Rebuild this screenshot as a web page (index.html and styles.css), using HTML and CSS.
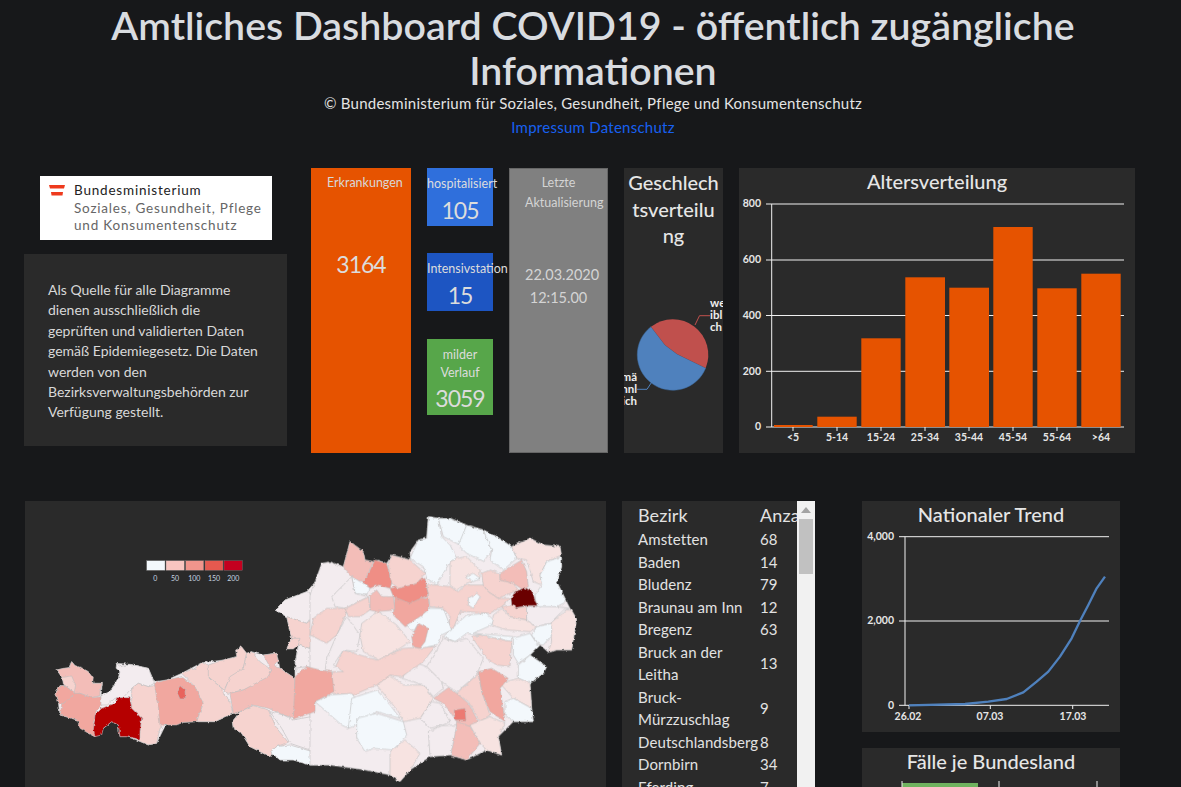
FILE: index.html
```html
<!DOCTYPE html>
<html lang="de">
<head>
<meta charset="utf-8">
<title>Amtliches Dashboard COVID19</title>
<link rel="stylesheet" href="styles.css">
</head>
<body>
<header class="head">
  <h1>Amtliches Dashboard COVID19 - öffentlich zugängliche Informationen</h1>
  <p class="copy">© Bundesministerium für Soziales, Gesundheit, Pflege und Konsumentenschutz</p>
  <p class="links"><a href="#">Impressum</a> <a href="#">Datenschutz</a></p>
</header>

<section class="row-top">
  <div class="col-left">
    <div class="logo">
      <svg class="flag" width="16" height="11" viewBox="0 0 16 11"><path class="flag-r" d="M0 0H16L15 3.500H1Z"/><path class="flag-r" d="M2 7H14L13.500 10.500H2.500Z"/></svg>
      <div class="logo-text">
        <div class="logo-strong">Bundesministerium</div>
        <div>Soziales, Gesundheit, Pflege</div>
        <div>und Konsumentenschutz</div>
      </div>
    </div>
    <div class="note">Als Quelle für alle Diagramme dienen ausschließlich die geprüften und validierten Daten gemäß Epidemiegesetz. Die Daten werden von den Bezirksverwaltungsbehörden zur Verfügung gestellt.</div>
  </div>

  <div class="tile tile-orange">
    <div class="tile-label">Erkrankungen</div>
    <div class="tile-big tile-big-low">3164</div>
  </div>

  <div class="stack">
    <div class="mini mini-blue"><div class="mini-label">hospitalisiert</div><div class="tile-big">105</div></div>
    <div class="mini mini-navy"><div class="mini-label">Intensivstation</div><div class="tile-big">15</div></div>
    <div class="mini mini-green"><div class="mini-label">milder Verlauf</div><div class="tile-big">3059</div></div>
  </div>

  <div class="tile tile-gray">
    <div class="tile-label">Letzte Aktualisierung</div>
    <div class="stamp">22.03.2020</div>
    <div class="stamp stamp-time">12:15.00</div>
  </div>

  <div class="panel pie-panel">
    <h2 class="pie-title">Geschlechtsverteilung</h2>
    <svg class="pie" width="99" height="205" viewBox="624 248 99 205">
      <path class="pie-blue" d="M651 326.700A35.500 35.500 0 1 0 705.700 368L677 354L665 345Z"/>
      <path class="pie-red" d="M651 326.700A35.500 35.500 0 0 1 705.700 368L677 354L665 345Z"/>
      <path class="lead-red" d="M695 325L699.500 315.700H710"/>
      <path class="lead-blue" d="M652 381.700L647 389.300H637"/>
      <text class="pie-text" x="710" y="307">we</text>
      <text class="pie-text" x="710" y="319">ibl</text>
      <text class="pie-text" x="710" y="331">ch</text>
      <text class="pie-text end" x="637" y="381">mä</text>
      <text class="pie-text end" x="637" y="393">nnl</text>
      <text class="pie-text end" x="637" y="405">ich</text>
    </svg>
  </div>

  <div class="panel age-panel">
    <h2 class="chart-title">Altersverteilung</h2>
    <svg class="chart" width="396" height="255" viewBox="739 198 396 255">
      <path class="grid" d="M766 204H1124M766 260H1124M766 315.500H1124M766 371.300H1124M766 427H1124M771.700 204V427"/>
      <g class="bars">
        <rect x="774" y="425" width="38.700" height="2"/>
        <rect x="817.300" y="416.700" width="39.400" height="10.300"/>
        <rect x="861.300" y="338.300" width="39.400" height="88.700"/>
        <rect x="905.300" y="277.300" width="39.700" height="149.700"/>
        <rect x="949.300" y="287.700" width="39.700" height="139.300"/>
        <rect x="993.300" y="227" width="39.400" height="200"/>
        <rect x="1037.300" y="288.300" width="39.400" height="138.700"/>
        <rect x="1081.300" y="273.700" width="39.400" height="153.300"/>
      </g>
      <path class="grid" d="M793 427V431M837 427V431M881 427V431M925 427V431M969 427V431M1013 427V431M1057 427V431M1101 427V431"/>
      <g class="tick-y">
        <text x="761" y="207">800</text><text x="761" y="263">600</text><text x="761" y="319">400</text><text x="761" y="375">200</text><text x="761" y="430">0</text>
      </g>
      <g class="tick-x">
        <text x="793" y="441">&lt;5</text><text x="837" y="441">5-14</text><text x="881" y="441">15-24</text><text x="925" y="441">25-34</text><text x="969" y="441">35-44</text><text x="1013" y="441">45-54</text><text x="1057" y="441">55-64</text><text x="1101" y="441">&gt;64</text>
      </g>
    </svg>
  </div>
</section>

<section class="row-bottom">
  <div class="panel map-panel">
    <svg class="map" width="581" height="400" viewBox="25 501 581 400">
      <defs>
        <filter id="rough" x="0" y="0" width="100%" height="100%" filterUnits="objectBoundingBox">
          <feTurbulence type="fractalNoise" baseFrequency=".25" numOctaves="2" seed="4" result="n"/>
          <feDisplacementMap in="SourceGraphic" in2="n" scale="3" xChannelSelector="R" yChannelSelector="G"/>
        </filter>
      </defs>
      <g class="legend">
        <rect class="w" x="146.700" y="560.700" width="18.300" height="9.600"/>
        <rect class="l1" x="166" y="560.700" width="18.300" height="9.600"/>
        <rect class="l2" x="185.700" y="560.700" width="18" height="9.600"/>
        <rect class="l3" x="205" y="560.700" width="18" height="9.600"/>
        <rect class="l4" x="224" y="560.700" width="18.300" height="9.600"/>
        <text x="155.300" y="581">0</text><text x="175" y="581">50</text><text x="194.300" y="581">100</text><text x="214" y="581">150</text><text x="233.300" y="581">200</text>
      </g>
      <g class="rough">
      <g class="regions" transform="translate(20 495) scale(.3333)">
        <polygon class="g" points="105,597 120,572 135,572 125,545 110,525 147,518 155,500 165,512 205,530 220,565 247,565 243,602 270,590 295,550 300,530 288,505 330,508 385,520 403,560 440,555 485,535 545,503 610,495 650,485 660,455 680,475 695,470 730,480 770,475 780,520 825,550 825,500 835,450 800,462 815,430 800,365 765,345 795,315 860,290 885,262 930,270 930,810 870,810 820,795 780,795 752,770 770,755 750,785 690,755 665,715 640,700 637,680 660,650 640,655 585,680 530,680 490,682 437,690 410,745 385,750 350,735 320,725 300,725 295,690 275,680 250,700 225,725 205,715 172,675 120,660 115,625"/>
        <polygon class="p3" points="110,525 130,520 147,518 155,500 165,512 185,518 205,530 220,550 218,565 247,565 240,590 240,602 215,608 180,595 150,600 135,572 125,545"/>
        <polygon class="p2" points="127,547 155,543 167,570 163,592 145,580 130,567"/>
        <polygon class="p4" points="105,597 120,572 135,572 165,595 145,615 125,630 115,625"/>
        <polygon class="p4" points="125,630 165,595 180,595 215,608 243,605 245,630 230,645 220,685 230,700 225,725 205,715 180,700 172,675 120,660"/>
        <polygon class="g" points="290,505 300,515 330,508 385,520 403,565 385,575 355,565 335,580 310,607 285,610 262,630 243,630 243,602 270,590 295,550 300,530 288,520"/>
        <polygon class="p2" points="335,580 355,565 385,575 415,570 420,640 437,690 420,700 410,745 385,750 350,735 360,710 365,670 335,640"/>
        <polygon class="dk" points="225,660 245,640 285,625 290,608 330,608 335,640 365,670 360,710 360,735 345,730 320,725 300,725 295,690 275,680 250,700 245,720 225,725 220,705"/>
        <polygon class="p4" points="403,565 440,555 485,545 525,575 550,625 530,680 490,682 470,690 420,690 415,640"/>
        <polygon class="r1" points="470,590 480,572 495,585 497,612 480,612"/>
        <polygon class="p2" points="485,535 525,520 545,503 575,515 565,545 605,580 612,600 628,615 640,655 585,680 530,680 550,625 525,575"/>
        <polygon class="p2" points="565,510 610,495 650,485 647,465 665,455 680,475 670,520 655,535 625,560 612,585 565,545"/>
        <polygon class="p2" points="680,475 695,470 720,500 755,525 745,545 710,570 670,585 625,595 612,590 630,545 670,520"/>
        <polygon class="p3" points="630,595 670,585 745,545 755,525 730,480 770,475 775,500 760,510 780,520 825,550 825,670 790,660 745,640 700,630 660,650 640,655"/>
        <polygon class="p2" points="637,680 660,650 700,632 745,645 770,700 805,742 770,755 750,785 690,755 665,715 640,700"/>
        <polygon class="g" points="750,650 790,660 820,675 900,660 900,780 870,765 810,745 785,700"/>
        <polygon class="w" points="752,770 770,755 810,750 870,768 900,775 900,810 870,810 820,795 780,795"/>
        <polygon class="g" points="825,520 835,450 870,460 900,470 900,525 860,515"/>
        <polygon class="g" points="765,345 795,315 860,290 885,300 885,350 860,385 800,365"/>
        <polygon class="p2" points="800,365 860,385 885,365 900,370 900,480 870,460 835,450 815,430"/>
        <polygon class="p2" points="800,462 815,430 840,430 835,450 820,462"/>
      </g>
      <g class="regions" transform="translate(310 495) scale(.3333)">
        <polygon class="g" points="0,300 35,205 60,200 100,215 120,140 160,170 165,195 190,200 205,195 230,205 245,180 300,195 300,170 325,135 350,130 355,65 385,70 420,70 470,90 520,105 560,125 605,155 660,130 700,150 750,155 755,215 740,260 780,340 800,372 785,465 740,465 715,472 690,450 660,480 710,515 700,535 660,565 665,640 670,680 610,680 565,725 575,780 530,765 470,795 420,780 360,785 300,825 270,860 240,840 165,825 60,810 0,810"/>
        <polygon class="w" points="300,190 325,135 350,130 355,65 385,70 395,125 420,150 440,190 420,200 380,270 350,250 340,215"/>
        <polygon class="w" points="385,70 420,70 470,90 450,150 400,125"/>
        <polygon class="w" points="470,90 520,105 545,165 520,200 470,175 445,150"/>
        <polygon class="w" points="520,105 560,125 605,155 620,190 580,225 540,195 545,165"/>
        <polygon class="p1" points="605,155 660,130 700,150 750,155 755,180 710,200 690,240 695,270 670,260 650,195 620,190"/>
        <polygon class="w" points="710,200 755,185 755,215 740,260 770,320 740,335 680,340 675,300 695,270 690,240"/>
        <polygon class="p2" points="350,270 380,270 420,275 445,290 465,270 520,270 535,290 565,310 600,310 575,335 540,355 470,350 450,350 430,400 415,405 420,365 400,340 360,335"/>
        <polygon class="p1" points="420,200 440,190 470,185 510,225 510,250 470,265 440,285 420,270"/>
        <polygon class="w" points="465,245 490,235 510,250 490,260"/>
        <polygon class="p2" points="515,235 540,225 570,235 570,255 610,265 625,285 565,310 535,290 520,270"/>
        <polygon class="p3" points="570,235 635,195 650,230 655,275 640,285 610,265 570,255"/>
        <polygon class="w" points="475,310 500,295 510,305 490,340 475,330"/>
        <polygon class="p2" points="575,335 605,330 620,338 650,335 650,375 600,365"/>
        <polygon class="vdk" points="603,310 615,290 645,278 668,290 675,315 682,332 650,332 620,338 605,330"/>
        <polygon class="p1" points="550,360 575,340 600,365 650,375 680,395 660,410 590,405 545,390"/>
        <polygon class="w" points="400,425 470,360 530,355 550,375 545,390 500,410 490,415 610,425 600,440 560,430 510,420 470,415 435,440"/>
        <polygon class="g" points="650,335 740,335 780,340 760,345 720,385 680,395 650,375"/>
        <polygon class="p1" points="720,385 770,345 785,345 800,372 785,465 740,465 715,472 725,440"/>
        <polygon class="w" points="680,395 725,385 725,420 700,450 680,445 665,420"/>
        <polygon class="w" points="610,430 660,415 680,445 690,450 660,480 625,505 610,480"/>
        <polygon class="w" points="625,510 660,480 710,515 700,535 660,565 625,550"/>
        <polygon class="p1" points="570,565 625,550 660,565 665,640 610,610"/>
        <polygon class="w" points="585,620 610,610 665,640 670,680 610,680 585,660"/>
        <polygon class="p2" points="485,425 510,420 605,440 600,515 560,510 530,490"/>
        <polygon class="p2" points="440,595 505,535 515,590 540,660 510,680 475,620"/>
        <polygon class="p4" points="505,530 545,520 595,550 570,580 585,680 540,650 515,590"/>
        <polygon class="p3" points="370,610 415,578 440,595 475,625 505,680 480,695 440,680 420,650 400,625"/>
        <polygon class="r2" points="432,645 465,640 468,675 435,675"/>
        <polygon class="p3" points="440,680 480,695 510,745 470,795 422,780"/>
        <polygon class="p1" points="480,690 540,665 585,685 565,725 575,780 530,765 510,745"/>
        <polygon class="g" points="330,670 365,620 390,625 420,680 395,692 360,700"/>
        <polygon class="g" points="355,710 395,692 440,690 430,745 422,780 360,785"/>
        <polygon class="g" points="350,515 385,455 400,430 435,440 470,430 520,490 500,540 440,590 415,575 395,560"/>
        <polygon class="g" points="275,550 310,500 350,515 395,560 400,580 370,605 340,570"/>
        <polygon class="p1" points="200,570 240,540 280,570 340,570 370,610 330,670 280,680 265,650"/>
        <polygon class="p2" points="65,540 100,465 150,480 200,495 280,460 375,455 340,500 275,545 240,540 200,570 130,600 70,595"/>
        <polygon class="g" points="45,530 50,490 80,420 110,365 150,420 140,470 100,465 70,510 100,530"/>
        <polygon class="p2" points="0,420 10,370 50,340 115,340 80,420 50,445"/>
        <polygon class="p1" points="155,385 190,360 200,345 260,390 300,440 270,460 205,495 160,470 150,420"/>
        <polygon class="p4" points="255,305 300,320 355,305 358,345 300,390 285,395 250,360"/>
        <polygon class="p5" points="240,280 300,260 345,250 355,300 300,325 250,305"/>
        <polygon class="w" points="290,390 330,365 360,340 400,340 425,405 395,420 380,450 330,460 350,410 325,385 310,410"/>
        <polygon class="p4" points="305,425 325,385 355,400 345,440 330,460 310,455"/>
        <polygon class="p2" points="235,205 245,180 300,195 345,235 320,265 265,280 240,260"/>
        <polygon class="p5" points="160,265 195,195 230,205 245,265 240,280 205,270 180,280"/>
        <polygon class="p3" points="100,215 120,140 160,170 165,195 190,200 160,265 125,245"/>
        <polygon class="p3" points="180,300 200,285 215,305 250,305 255,345 200,350 180,345"/>
        <polygon class="w" points="125,245 160,265 180,280 170,300 135,295"/>
        <polygon class="p2" points="105,340 175,305 180,345 150,365 115,365"/>
        <polygon class="g" points="65,305 125,245 135,295 175,305 105,340 75,335"/>
        <polygon class="p4" points="-45,545 -10,515 30,525 65,530 72,590 15,620 15,650 -50,672"/>
        <polygon class="w" points="15,620 60,600 125,595 150,630 115,700 95,690"/>
        <polygon class="w" points="125,610 200,585 240,630 270,670 200,650 140,690 115,700"/>
        <polygon class="w" points="140,670 200,655 280,680 290,720 250,765 190,760 165,770 140,730"/>
        <polygon class="p1" points="240,770 285,735 330,775 300,825 270,860 240,840"/>
      </g>
      </g>
    </svg>
  </div>

  <div class="panel list-panel">
    <div class="list-view">
      <table class="list">
        <thead><tr><th class="name">Bezirk</th><th>Anzahl</th></tr></thead>
        <tbody>
          <tr><td>Amstetten</td><td>68</td></tr>
          <tr><td>Baden</td><td>14</td></tr>
          <tr><td>Bludenz</td><td>79</td></tr>
          <tr><td>Braunau am Inn</td><td>12</td></tr>
          <tr><td>Bregenz</td><td>63</td></tr>
          <tr><td>Bruck an der Leitha</td><td>13</td></tr>
          <tr><td>Bruck-Mürzzuschlag</td><td>9</td></tr>
          <tr><td>Deutschlandsberg</td><td>8</td></tr>
          <tr><td>Dornbirn</td><td>34</td></tr>
          <tr><td>Eferding</td><td>7</td></tr>
        </tbody>
      </table>
    </div>
    <div class="scrollbar">
      <div class="scroll-btn"><svg width="10" height="6" viewBox="0 0 10 6"><path class="scroll-arrow" d="M5 0L10 6H0Z"/></svg></div>
      <div class="scroll-thumb"></div>
    </div>
  </div>

  <div class="col-right">
    <div class="panel trend-panel">
      <h2 class="chart-title">Nationaler Trend</h2>
      <svg class="chart" width="258" height="201" viewBox="862 531 258 201">
        <path class="grid" d="M899 536.700H1109M899 621H1109M899 705.300H1109M905 536.700V705.300M909 705.300V709M990.300 705.300V709M1072.700 705.300V709"/>
        <g transform="translate(850 495) scale(.3333)"><polyline class="trend" points="177,631 345,627 415,620 470,612 520,592 560,560 595,530 630,485 665,430 690,378 715,330 740,280 765,245"/></g>
        <g class="tick-y"><text x="894" y="540">4,000</text><text x="894" y="624">2,000</text><text x="894" y="709">0</text></g>
        <g class="tick-x"><text x="908" y="720">26.02</text><text x="990" y="720">07.03</text><text x="1073" y="720">17.03</text></g>
      </svg>
    </div>
    <div class="panel state-panel">
      <h2 class="chart-title">Fälle je Bundesland</h2>
      <svg class="chart" width="258" height="60" viewBox="862 778 258 60">
        <rect class="state-bar" x="902" y="783" width="76" height="30"/>
        <path class="grid" d="M902 781V820M999 781V820M1097 781V820"/>
      </svg>
    </div>
  </div>
</section>
</body>
</html>
```
FILE: styles.css
```css
html, body {
  margin: 0;
  height: 787px;
  overflow: hidden;
  background: #17181a;
  color: #d6d8da;
  font-family: Lato, "Open Sans", sans-serif;
}

.head {
  padding: 2px 0 0 5px;
  text-align: center;
}
.head h1 {
  margin: 0;
  padding: 0 100px;
  font-size: 39.300px;
  line-height: 45px;
  font-weight: 600;
  color: #d9dce0;
}
.copy {
  margin: 0;
  font-size: 15px;
  line-height: 22px;
  letter-spacing: .25px;
  color: #e4e4e4;
}
.links {
  margin: 2px 0 0;
  font-size: 15px;
  line-height: 22px;
  letter-spacing: .25px;
}
.links a {
  color: #1760f0;
  text-decoration: none;
}

.row-top {
  display: flex;
  gap: 16px;
  height: 285px;
  margin-top: 30px;
  padding-left: 24px;
}
.col-left {
  width: 263px;
  margin-right: 8px;
}
.logo {
  display: flex;
  gap: 9px;
  box-sizing: border-box;
  width: 232px;
  height: 64px;
  margin: 8px 0 14px 16px;
  padding: 6px 0 0 9px;
  background: #fff;
}
.flag { margin-top: 3px; flex: none; }
.flag-r { fill: #ee3a1d; }
.logo-text {
  font-size: 13.500px;
  line-height: 17.500px;
  letter-spacing: .8px;
  color: #666;
}
.logo-strong { color: #222; }
.note {
  box-sizing: border-box;
  height: 192px;
  padding: 26px 24px;
  background: #2a2a2a;
  font-size: 14px;
  line-height: 20.400px;
  color: #d8d8d8;
}

.tile {
  box-sizing: border-box;
  width: 100px;
  padding: 5px 16px 0;
  text-align: center;
  font-size: 12.500px;
  color: #d8d8d8;
}
.tile-orange { background: #e65300; }
.tile-gray {
  width: 99px;
  background: #808080;
  border: 1px solid #666;
  padding: 4px 15px 0;
  color: #d4d4d4;
}
.tile-label {
  line-height: 20px;
}
.tile-big {
  font-size: 23px;
  line-height: 32px;
  letter-spacing: -1px;
  color: #dcdcdc;
}
.tile-big-low { margin-top: 55px; }
.stamp {
  margin-top: 51px;
  font-size: 14.500px;
  line-height: 22px;
  white-space: nowrap;
}
.stamp-time { margin-top: 1px; }

.stack {
  width: 66px;
  display: flex;
  flex-direction: column;
}
.mini {
  box-sizing: border-box;
  height: 58px;
  padding-top: 6px;
  text-align: center;
  font-size: 12.500px;
  color: #dcdcdc;
  white-space: nowrap;
}
.mini-label { line-height: 20px; }
.mini-blue { background: #2f6fdc; }
.mini-navy { background: #1d55c2; margin-top: 27px; }
.mini-green {
  height: 76px;
  margin-top: 28px;
  padding-top: 7px;
  background: #57a64a;
  white-space: normal;
}
.mini-green .mini-label { line-height: 18px; }

.panel { background: #2a2a2a; }
.pie-panel {
  width: 99px;
  overflow: hidden;
}
.pie-title {
  box-sizing: border-box;
  margin: 0;
  height: 80px;
  padding: 1px 3px 0;
  font-size: 20px;
  line-height: 26.700px;
  font-weight: 500;
  text-align: center;
  word-break: break-all;
  color: #e6e6e6;
}
.pie, .chart, .map { display: block; }
.pie-blue { fill: #4f81bd; stroke: #3d6a9f; stroke-width: .5; }
.pie-red { fill: #c0504d; }
.lead-red, .lead-blue { fill: none; stroke-width: 1; }
.lead-red { stroke: #c0504d; }
.lead-blue { stroke: #4f81bd; }
.pie-text {
  font-size: 11.500px;
  font-weight: 700;
  fill: #eee;
}
.end { text-anchor: end; }

.age-panel { width: 396px; }
.chart-title {
  margin: 0;
  height: 30px;
  font-size: 20px;
  line-height: 27px;
  font-weight: 500;
  text-align: center;
  color: #e6e6e6;
}
.grid { fill: none; stroke: #f0f0f0; stroke-width: 1; }
.bars rect { fill: #e65300; }
.tick-y text, .tick-x text {
  font-size: 10.500px;
  font-weight: 700;
  fill: #e6e6e6;
}
.tick-y text { text-anchor: end; }
.tick-x text { text-anchor: middle; }

.row-bottom {
  display: flex;
  align-items: flex-start;
  margin: 48px 0 0 25px;
}
.map-panel {
  width: 581px;
  height: 400px;
  margin-right: 16px;
}
.rough { filter: url(#rough); }
.legend rect { stroke: #777; stroke-width: .4; }
.legend text {
  font-size: 7px;
  text-anchor: middle;
  fill: #c8d4e0;
}
.regions polygon { stroke: #bdbdbd; stroke-width: 1.800; stroke-linejoin: round; }
.w { fill: #f3f8fc; }
.g { fill: #f3ecef; }
.p1 { fill: #f7e3e1; }
.p2 { fill: #f6d3cf; }
.p3 { fill: #f3bdb8; }
.p4 { fill: #f1a79f; }
.p5 { fill: #ef8e85; }
.r1 { fill: #e8635c; }
.r2 { fill: #ec7a72; }
.dk { fill: #b50006; }
.vdk { fill: #6b0000; }
.l1 { fill: #f8c5c0; }
.l2 { fill: #f0958c; }
.l3 { fill: #e5594f; }
.l4 { fill: #c4001f; }

.list-panel {
  display: flex;
  width: 193px;
  height: 400px;
  margin-right: 47px;
}
.list-view {
  box-sizing: border-box;
  width: 175px;
  padding-left: 16px;
  overflow: hidden;
}
.scrollbar {
  width: 18px;
  background: #f1f1f1;
}
.scroll-btn {
  display: flex;
  align-items: center;
  justify-content: center;
  height: 18px;
}
.scroll-arrow { fill: #a3a3a3; }
.scroll-thumb {
  height: 55px;
  margin: 0 2px;
  background: #c1c1c1;
}
.list {
  table-layout: fixed;
  width: 190px;
  border-collapse: collapse;
  font-size: 15px;
  letter-spacing: .1px;
  color: #e2e2e2;
}
.list th {
  height: 27px;
  padding: 0;
  font-size: 18px;
  font-weight: 400;
  text-align: left;
  white-space: nowrap;
}
.list th.name { width: 122px; }
.list td {
  padding: 0;
  line-height: 22.500px;
}

.col-right { width: 258px; }
.trend-panel { height: 231px; }
.state-panel {
  margin-top: 16px;
  height: 200px;
  overflow: hidden;
}
.trend { fill: none; stroke: #4f81bd; stroke-width: 7; stroke-linejoin: round; }
.state-bar { fill: #6fb35f; }
```
